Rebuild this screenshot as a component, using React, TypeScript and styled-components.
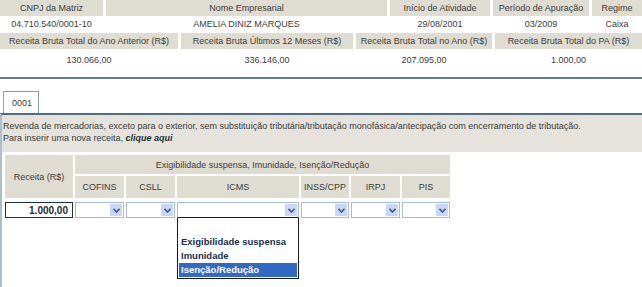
import React from "react";
import styled, { createGlobalStyle } from "styled-components";

const FONT = `"Liberation Sans", Arial, sans-serif`;

const GlobalStyle = createGlobalStyle`
  html, body {
    margin: 0;
    padding: 0;
    background: #ffffff;
  }
  body {
    font-family: ${FONT};
    font-size: 9px;
    color: #3a3a3a;
  }
`;

const headerRow1 = [
  { label: "CNPJ da Matriz", value: "04.710.540/0001-10" },
  { label: "Nome Empresarial", value: "AMELIA DINIZ MARQUES" },
  { label: "Início de Atividade", value: "29/08/2001" },
  { label: "Período de Apuração", value: "03/2009" },
  { label: "Regime", value: "Caixa" },
];

const headerRow2 = [
  { label: "Receita Bruta Total do Ano Anterior (R$)", value: "130.066,00" },
  { label: "Receita Bruta Últimos 12 Meses (R$)", value: "336.146,00" },
  { label: "Receita Bruta Total no Ano (R$)", value: "207.095,00" },
  { label: "Receita Bruta Total do PA (R$)", value: "1.000,00" },
];

const taxes = [
  { name: "COFINS", width: 49 },
  { name: "CSLL", width: 49 },
  { name: "ICMS", width: 122 },
  { name: "INSS/CPP", width: 48 },
  { name: "IRPJ", width: 49 },
  { name: "PIS", width: 48 },
];

const options = ["", "Exigibilidade suspensa", "Imunidade", "Isenção/Redução"];

function Select({ open }: { open?: boolean }) {
  return (
    <SelectWrap>
      <SelectBox $open={open}>
        <SelectArrow>
          <svg width="7" height="5" viewBox="0 0 7 5">
            <polyline points="0.5,0.8 3.5,4 6.5,0.8" fill="none" stroke="#3d5a9a" strokeWidth="1.6" />
          </svg>
        </SelectArrow>
      </SelectBox>
      {open && (
        <ListBox>
          {options.map((o, i) => (
            <Option key={i} $selected={i === options.length - 1}>
              {o || "\u00a0"}
            </Option>
          ))}
        </ListBox>
      )}
    </SelectWrap>
  );
}

export default function App() {
  return (
    <Page>
      <GlobalStyle />
      <InfoGrid $cols="103px 281px 100px 96px 1fr" $valueHeight={16}>
        {headerRow1.map((c) => (
          <InfoLabel key={c.label}>{c.label}</InfoLabel>
        ))}
        {headerRow1.map((c) => (
          <InfoValue key={c.label}>{c.value}</InfoValue>
        ))}
      </InfoGrid>
      <InfoGrid $cols="178px 172px 136px 1fr" $valueHeight={22} $top={1}>
        {headerRow2.map((c) => (
          <InfoLabel key={c.label}>{c.label}</InfoLabel>
        ))}
        {headerRow2.map((c) => (
          <InfoValue key={c.label}>{c.value}</InfoValue>
        ))}
      </InfoGrid>
      <Divider />
      <TabBar>
        <Tab>0001</Tab>
      </TabBar>
      <Panel>
        <Description>
          <DescLine>
            Revenda de mercadorias, exceto para o exterior, sem substituição tributária/tributação monofásica/antecipação com encerramento de tributação.
          </DescLine>
          <DescLine>
            Para inserir uma nova receita, <ClickHere>clique aqui</ClickHere>
          </DescLine>
        </Description>
        <TaxGrid $cols={taxes.map((t) => `${t.width}px`).join(" ")}>
          <HeadCell $rowSpan={2}>Receita (R$)</HeadCell>
          <HeadCell $colSpan={taxes.length}>Exigibilidade suspensa, Imunidade, Isenção/Redução</HeadCell>
          {taxes.map((t) => (
            <HeadCell key={t.name}>{t.name}</HeadCell>
          ))}
          <AmountInput defaultValue="1.000,00" readOnly />
          {taxes.map((t) => (
            <Select key={t.name} open={t.name === "ICMS"} />
          ))}
        </TaxGrid>
      </Panel>
    </Page>
  );
}

const Page = styled.div`
  display: flex;
  flex-direction: column;
  height: 287px;
  overflow: hidden;
`;

const InfoGrid = styled.div<{ $cols: string; $valueHeight: number; $top?: number }>`
  display: grid;
  grid-template-columns: ${(p) => p.$cols};
  grid-template-rows: 16px ${(p) => p.$valueHeight}px;
  column-gap: 3px;
  margin-top: ${(p) => p.$top ?? 0}px;
`;

const InfoLabel = styled.div`
  background: #dfdcd1;
  display: flex;
  align-items: center;
  justify-content: center;
  white-space: nowrap;
  overflow: hidden;
  color: #3c3c3c;
`;

const InfoValue = styled.div`
  display: flex;
  align-items: center;
  justify-content: center;
  white-space: nowrap;
  color: #3c3c3c;
`;

const Divider = styled.div`
  height: 2px;
  background: #62807f;
  margin-top: 6px;
`;

const TabBar = styled.div`
  display: flex;
  padding: 12px 0 0 3px;
`;

const Tab = styled.div`
  width: 26px;
  height: 21px;
  padding-left: 8px;
  border: 1px solid #8a9ea8;
  border-bottom: none;
  display: flex;
  align-items: center;
  background: #ffffff;
  color: #3c3c3c;
`;

const Panel = styled.div`
  flex: 1;
  border-top: 2px solid #4f6e84;
  border-left: 2px solid #a9bfcc;
  display: flex;
  flex-direction: column;
`;

const Description = styled.div`
  background: #e5e3db;
  padding: 5px 0 8px 1px;
  display: flex;
  flex-direction: column;
`;

const DescLine = styled.div`
  height: 12px;
  line-height: 12px;
  white-space: nowrap;
  color: #3a3a3a;
`;

const ClickHere = styled.span`
  font-weight: bold;
  font-style: italic;
  color: #1e3232;
  cursor: pointer;
`;

const TaxGrid = styled.div<{ $cols: string }>`
  display: grid;
  grid-template-columns: 68px ${(p) => p.$cols};
  grid-template-rows: 19px 22px 16px;
  gap: 2px;
  margin: 3px 0 0 3px;
  align-self: flex-start;
  & > :nth-last-child(-n + 7) {
    margin-top: 2px;
  }
`;

const HeadCell = styled.div<{ $rowSpan?: number; $colSpan?: number }>`
  background: #dfdcd1;
  display: flex;
  align-items: center;
  justify-content: center;
  white-space: nowrap;
  color: #3c3c3c;
  ${(p) => (p.$rowSpan ? `grid-row: span ${p.$rowSpan};` : "")}
  ${(p) => (p.$colSpan ? `grid-column: span ${p.$colSpan};` : "")}
`;

const AmountInput = styled.input`
  box-sizing: border-box;
  width: 100%;
  height: 16px;
  margin: 0;
  padding: 0 4px 0 0;
  border: 1px solid #1d2e45;
  font-family: ${FONT};
  font-size: 10px;
  font-weight: bold;
  text-align: right;
  color: #1f2a3a;
  background: #ffffff;
  outline: none;
`;

const SelectWrap = styled.div`
  position: relative;
  height: 16px;
`;

const SelectBox = styled.div<{ $open?: boolean }>`
  box-sizing: border-box;
  height: 16px;
  border: 1px solid #a6b9d6;
  border-bottom-color: ${(p) => (p.$open ? "#1a1a1a" : "#a6b9d6")};
  background: #ffffff;
  display: flex;
  justify-content: flex-end;
  padding: 1px;
`;

const SelectArrow = styled.div`
  width: 12px;
  background: #c9d6f5;
  display: flex;
  align-items: center;
  justify-content: center;
`;

const ListBox = styled.div`
  position: absolute;
  left: 0;
  right: 0;
  top: 16px;
  box-sizing: border-box;
  border: 1px solid #1a1a1a;
  border-top: none;
  background: #ffffff;
  padding: 3px 1px 1px 1px;
  z-index: 2;
`;

const Option = styled.div<{ $selected?: boolean }>`
  height: 14px;
  line-height: 14px;
  padding-left: 2px;
  font-family: ${FONT};
  font-size: 9.5px;
  font-weight: bold;
  white-space: nowrap;
  color: ${(p) => (p.$selected ? "#ffffff" : "#16304f")};
  background: ${(p) => (p.$selected ? "#316ac5" : "transparent")};
`;
